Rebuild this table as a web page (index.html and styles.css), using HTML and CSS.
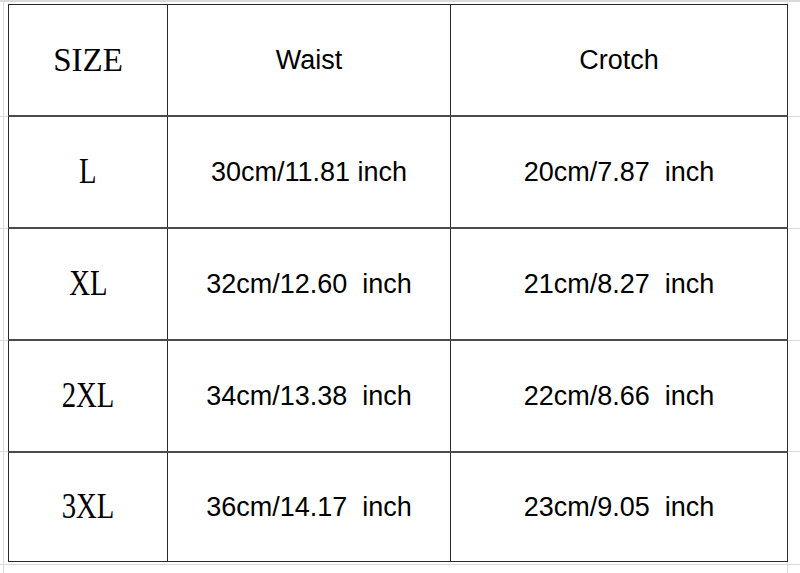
FILE: index.html
```html
<!DOCTYPE html>
<html>
<head>
<meta charset="utf-8">
<link rel="stylesheet" href="styles.css">
</head>
<body>
<table class="chart">
  <colgroup>
    <col class="c-size">
    <col class="c-waist">
    <col class="c-crotch">
  </colgroup>
  <tr class="row">
    <td class="size"><span class="lbl lbl-head">SIZE</span></td>
    <td class="val">Waist</td>
    <td class="val">Crotch</td>
  </tr>
  <tr class="row">
    <td class="size"><span class="lbl">L</span></td>
    <td class="val">30cm/11.81 inch</td>
    <td class="val">20cm/7.87  inch</td>
  </tr>
  <tr class="row">
    <td class="size"><span class="lbl">XL</span></td>
    <td class="val">32cm/12.60  inch</td>
    <td class="val">21cm/8.27  inch</td>
  </tr>
  <tr class="row">
    <td class="size"><span class="lbl">2XL</span></td>
    <td class="val">34cm/13.38  inch</td>
    <td class="val">22cm/8.66  inch</td>
  </tr>
  <tr class="row last">
    <td class="size"><span class="lbl">3XL</span></td>
    <td class="val">36cm/14.17  inch</td>
    <td class="val">23cm/9.05  inch</td>
  </tr>
</table>
</body>
</html>
```
FILE: styles.css
```css
html, body {
  margin: 0;
  padding: 0;
}
body {
  width: 800px;
  height: 573px;
  overflow: hidden;
  background-color: #fff;
  background-image:
    linear-gradient(#dadada, #dadada),
    linear-gradient(#dadada, #dadada),
    linear-gradient(#dadada, #dadada),
    linear-gradient(#dadada, #dadada),
    linear-gradient(#dadada, #dadada),
    linear-gradient(#dadada, #dadada),
    linear-gradient(#dadada, #dadada),
    linear-gradient(#dadada, #dadada);
  background-repeat: no-repeat;
  background-size:
    1px 100%,
    1px 100%,
    100% 2px,
    100% 1px,
    100% 1px,
    100% 1px,
    100% 1px,
    100% 1px;
  background-position:
    3px 0,
    787px 0,
    0 0,
    0 116px,
    0 228px,
    0 340px,
    0 451px,
    0 564px;
  padding-top: 4px;
  padding-left: 8px;
  box-sizing: border-box;
}
.chart {
  border-collapse: collapse;
  table-layout: fixed;
  width: 779px;
  background: #fff;
}
.c-size { width: 159px; }
.c-waist { width: 283px; }
.c-crotch { width: 337px; }
.chart td {
  border-left: 1px solid #2a2a2a;
  border-right: 1px solid #2a2a2a;
  border-top: 2px solid #4a4a4a;
  border-bottom: 2px solid #4a4a4a;
  padding: 0;
  text-align: center;
  vertical-align: middle;
  height: 110px;
  color: #000;
}
.row:first-child td {
  border-top: 1px solid #2a2a2a;
}
.row.last td {
  border-bottom: 1px solid #2a2a2a;
  height: 108px;
}
.val {
  font-family: "Liberation Sans", Arial, sans-serif;
  font-size: 27px;
  white-space: pre;
}
.size {
  font-family: "Liberation Serif", "Times New Roman", serif;
  font-size: 35px;
}
.lbl {
  display: inline-block;
  transform: scaleX(0.82);
}
.lbl-head {
  transform: none;
  font-size: 33px;
  letter-spacing: 0px;
}
```
